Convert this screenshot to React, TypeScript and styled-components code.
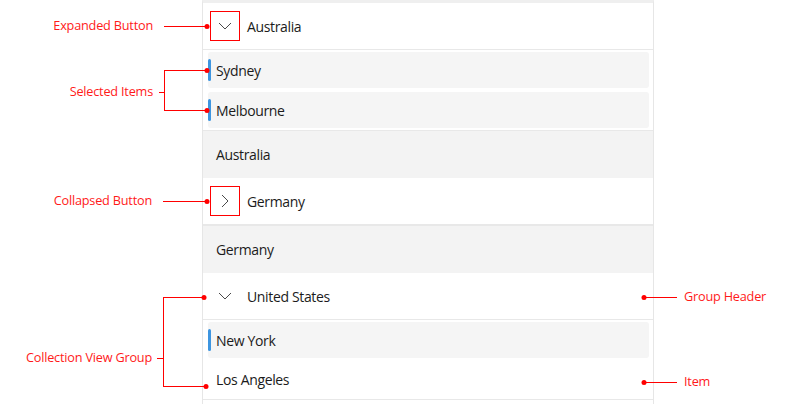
import React from "react";
import styled, { createGlobalStyle } from "styled-components";

const Global = createGlobalStyle`
  html, body { margin: 0; padding: 0; background: #ffffff; }
  body { width: 800px; height: 404px; overflow: hidden; font-family: "Open Sans", "Noto Sans", sans-serif; }
`;

const Page = styled.div`
  position: relative;
  width: 800px;
  height: 404px;
  display: flex;
  justify-content: flex-start;
  padding-left: 202px;
  box-sizing: border-box;
`;

const Panel = styled.div`
  width: 452px;
  height: 404px;
  box-sizing: border-box;
  border-left: 1px solid #e6e6e6;
  border-right: 1px solid #e6e6e6;
  border-top: 3px solid #efefef;
  background: #ffffff;
  display: flex;
  flex-direction: column;
  overflow: hidden;
`;

const Header = styled.div<{ $thick?: boolean }>`
  height: 46px;
  flex: none;
  background: #ffffff;
  border-bottom: ${(p) => (p.$thick ? 2 : 1)}px solid #e8e8e8;
  display: flex;
  align-items: center;
  padding-left: 7px;
  gap: 7px;
`;

const Toggle = styled.div<{ $marked?: boolean }>`
  width: 30px;
  height: 30px;
  box-sizing: border-box;
  border: 1px solid ${(p) => (p.$marked ? "#ff0000" : "transparent")};
  display: flex;
  align-items: center;
  justify-content: center;
  color: #4a4a4a;
`;

const HeaderText = styled.span`
  font-size: 14px;
  color: #1b1b1b;
  letter-spacing: -0.35px;
`;

const Items = styled.div<{ $gap: number }>`
  background: #ffffff;
  border-bottom: 1px solid #e8e8e8;
  padding: 2px 4px 2px 5px;
  display: flex;
  flex-direction: column;
  gap: ${(p) => p.$gap}px;
  flex: none;
`;

const Item = styled.div<{ $selected?: boolean }>`
  position: relative;
  height: 36px;
  border-radius: 3px;
  background: ${(p) => (p.$selected ? "#f5f5f5" : "#ffffff")};
  display: flex;
  align-items: center;
  padding-left: 8px;
  font-size: 14px;
  color: #1b1b1b;
  letter-spacing: -0.35px;
`;

const Indicator = styled.span`
  position: absolute;
  left: 0;
  top: 7px;
  width: 3px;
  height: 22px;
  border-radius: 2px;
  background: #3d95e0;
`;

const Footer = styled.div`
  height: 47px;
  flex: none;
  background: #f3f3f3;
  display: flex;
  align-items: center;
  padding-left: 13px;
  font-size: 14px;
  color: #1b1b1b;
  letter-spacing: -0.35px;
`;

const Label = styled.div<{ $x: number; $y: number; $right?: boolean }>`
  position: absolute;
  top: ${(p) => p.$y - 10}px;
  height: 18px;
  line-height: 18px;
  font-size: 12.7px;
  color: #ff1a1a;
  white-space: nowrap;
  letter-spacing: -0.2px;
  ${(p) => (p.$right ? `right: ${800 - p.$x}px;` : `left: ${p.$x}px;`)}
`;

const Overlay = styled.svg`
  position: absolute;
  left: 0;
  top: 0;
  pointer-events: none;
`;

const ChevronDown = () => (
  <svg width="14" height="8" viewBox="0 0 14 8">
    <path d="M1 1 L7 7 L13 1" fill="none" stroke="currentColor" strokeWidth="1" />
  </svg>
);

const ChevronRight = () => (
  <svg width="8" height="14" viewBox="0 0 8 14">
    <path d="M1 1 L7 7 L1 13" fill="none" stroke="currentColor" strokeWidth="1" />
  </svg>
);

const RED = "#ff0000";

export default function App() {
  return (
    <>
      <Global />
      <Page>
        <Panel>
          <Header>
            <Toggle $marked>
              <ChevronDown />
            </Toggle>
            <HeaderText>Australia</HeaderText>
          </Header>
          <Items $gap={4}>
            <Item $selected>
              <Indicator />
              Sydney
            </Item>
            <Item $selected>
              <Indicator />
              Melbourne
            </Item>
          </Items>
          <Footer>Australia</Footer>
          <Header $thick>
            <Toggle $marked>
              <ChevronRight />
            </Toggle>
            <HeaderText>Germany</HeaderText>
          </Header>
          <Footer>Germany</Footer>
          <Header>
            <Toggle>
              <ChevronDown />
            </Toggle>
            <HeaderText>United States</HeaderText>
          </Header>
          <Items $gap={3}>
            <Item $selected>
              <Indicator />
              New York
            </Item>
            <Item>Los Angeles</Item>
          </Items>
        </Panel>

        <Overlay width="800" height="404" viewBox="0 0 800 404">
          <g stroke={RED} strokeWidth="1" fill="none" shapeRendering="crispEdges">
            <path d="M164 26.5 H207" />
            <path d="M159 92.5 H164 M164.5 70 V111 M164 70.5 H207 M164 110.5 H207" />
            <path d="M163 201.5 H207" />
            <path d="M157 358.5 H163 M163.5 297 V387 M163 297.5 H204 M163 386.5 H206" />
            <path d="M644 297.5 H677" />
            <path d="M644 382.5 H677" />
          </g>
          <g fill={RED}>
            <circle cx="207" cy="26.5" r="2.5" />
            <circle cx="207" cy="70.5" r="2.5" />
            <circle cx="207" cy="110.5" r="2.5" />
            <circle cx="207" cy="201.5" r="2.5" />
            <circle cx="204" cy="297.5" r="2.5" />
            <circle cx="206" cy="386.5" r="2.5" />
            <circle cx="644" cy="297.5" r="2.5" />
            <circle cx="644" cy="382.5" r="2.5" />
          </g>
        </Overlay>

        <Label $x={153} $y={26} $right>Expanded Button</Label>
        <Label $x={153} $y={92} $right>Selected Items</Label>
        <Label $x={152} $y={201} $right>Collapsed Button</Label>
        <Label $x={152} $y={358} $right>Collection View Group</Label>
        <Label $x={684} $y={297}>Group Header</Label>
        <Label $x={684} $y={382}>Item</Label>
      </Page>
    </>
  );
}
